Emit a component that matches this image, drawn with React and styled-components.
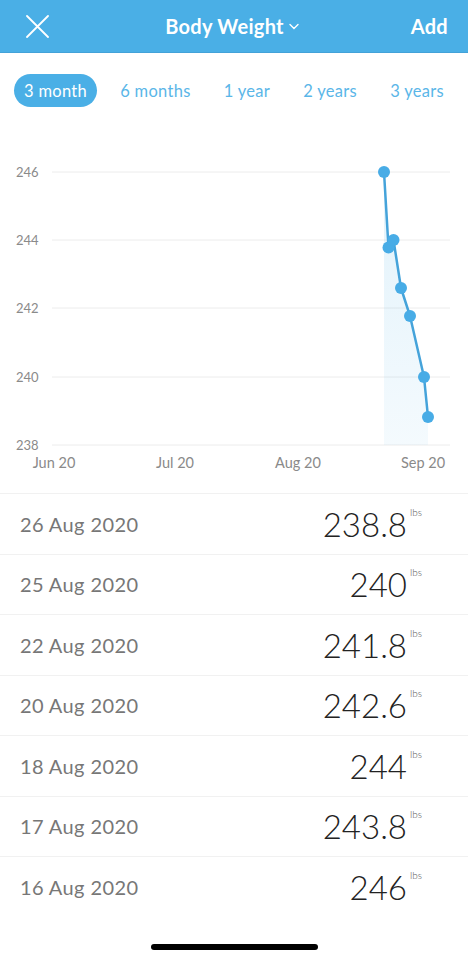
import React from "react";
import styled, { createGlobalStyle } from "styled-components";

const BLUE = "#4aafe6";

const GlobalStyle = createGlobalStyle`
    body{
        margin:0;
        background:#fff;
        font-family:Lato,"Open Sans",sans-serif;
    }
`;

const Page = styled.div`
    width:468px;
    height:960px;
    display:flex;
    flex-direction:column;
    background:#fff;
    overflow:hidden;
`;

const Header = styled.header`
    height:53px;
    background:${BLUE};
    border-bottom:1px solid #43a2d8;
    box-sizing:border-box;
    display:grid;
    grid-template-columns:60px 1fr 60px;
    align-items:center;
    padding:0 20px 0 26px;
    color:#fff;
`;

const Title = styled.div`
    display:flex;
    align-items:center;
    justify-content:center;
    gap:5px;
    font-weight:700;
    font-size:20px;
    letter-spacing:0.3px;
    padding-right:10px;
`;

const AddButton = styled.div`
    text-align:right;
    font-weight:700;
    font-size:20px;
    letter-spacing:0.3px;
`;

const Tabs = styled.nav`
    display:flex;
    justify-content:space-between;
    align-items:center;
    padding:0 14px;
    margin-top:21px;
    height:33px;
`;

const Tab = styled.div`
    height:33px;
    display:flex;
    align-items:center;
    padding:0 10px;
    border-radius:17px;
    font-size:16.5px;
    letter-spacing:0.3px;
    color:${p => (p.$active ? "#fff" : "#5ab6e8")};
    background:${p => (p.$active ? BLUE : "transparent")};
`;

const ChartWrap = styled.div`
    height:386px;
`;

const List = styled.div`
    display:flex;
    flex-direction:column;
`;

const Row = styled.div`
    height:60.5px;
    box-sizing:border-box;
    border-top:1px solid #f1f1f1;
    display:flex;
    align-items:center;
    justify-content:space-between;
    padding:0 61px 0 20px;
`;

const DateText = styled.span`
    font-size:20px;
    letter-spacing:0.4px;
    color:#777;
`;

const Value = styled.span`
    position:relative;
    font-size:33px;
    color:#222;
    font-weight:300;
`;

const Unit = styled.sup`
    position:absolute;
    left:100%;
    top:3px;
    margin-left:3px;
    font-size:10px;
    color:#555;
    line-height:1;
`;

const HomeBar = styled.div`
    margin:auto auto 10px;
    width:167px;
    height:6px;
    border-radius:3px;
    background:#000;
`;

const CloseIcon = () => (
    <svg width="23" height="23" viewBox="0 0 23 23">
        <path d="M1 1 L22 22 M22 1 L1 22" stroke="#fff" strokeWidth="1.8" strokeLinecap="round" />
    </svg>
);

const Chevron = () => (
    <svg width="10" height="7" viewBox="0 0 10 7">
        <path d="M1 1.5 L5 5.5 L9 1.5" stroke="#fff" strokeWidth="1.4" fill="none" strokeLinecap="round" />
    </svg>
);

const TABS = ["3 month", "6 months", "1 year", "2 years", "3 years"];

const Y_TICKS = [
    { label: "246", y: 65 },
    { label: "244", y: 133 },
    { label: "242", y: 201 },
    { label: "240", y: 270 },
    { label: "238", y: 338 },
];

const X_TICKS = [
    { label: "Jun 20", x: 54 },
    { label: "Jul 20", x: 175 },
    { label: "Aug 20", x: 298 },
    { label: "Sep 20", x: 423 },
];

const POINTS = [
    [384, 65],
    [388.5, 140.5],
    [393.5, 133],
    [401, 181],
    [410, 209],
    [424, 270],
    [428, 310],
];

const Chart = () => {
    const line = POINTS.map(p => p.join(",")).join(" ");
    const area = `384,338 ${line} 428,338`;
    return (
        <svg width="468" height="386" viewBox="0 0 468 386">
            <defs>
                <linearGradient id="fillGrad" x1="0" y1="0" x2="0" y2="1">
                    <stop offset="0" stopColor="#4aafe6" stopOpacity="0.16" />
                    <stop offset="1" stopColor="#4aafe6" stopOpacity="0.06" />
                </linearGradient>
            </defs>
            {Y_TICKS.map(t => (
                <g key={t.label}>
                    <line x1="52" x2="450" y1={t.y} y2={t.y} stroke="#ececec" strokeWidth="1" />
                    <text x="16" y={t.y + 4.5} fontSize="13" fill="#8a8a8a" fontFamily="Lato, sans-serif">{t.label}</text>
                </g>
            ))}
            <polygon points={area} fill="url(#fillGrad)" />
            <polyline points={line} fill="none" stroke="#45a3da" strokeWidth="2.5" strokeLinejoin="round" />
            {POINTS.map((p, i) => (
                <circle key={i} cx={p[0]} cy={p[1]} r="6" fill="#48ace6" />
            ))}
            {X_TICKS.map(t => (
                <text key={t.label} x={t.x} y="361" fontSize="14.5" fill="#8a8a8a" textAnchor="middle" fontFamily="Lato, sans-serif">{t.label}</text>
            ))}
        </svg>
    );
};

const ENTRIES = [
    ["26 Aug 2020", "238.8"],
    ["25 Aug 2020", "240"],
    ["22 Aug 2020", "241.8"],
    ["20 Aug 2020", "242.6"],
    ["18 Aug 2020", "244"],
    ["17 Aug 2020", "243.8"],
    ["16 Aug 2020", "246"],
];

export default function App() {
    return (
        <>
            <GlobalStyle />
            <Page>
                <Header>
                    <CloseIcon />
                    <Title>Body Weight <Chevron /></Title>
                    <AddButton>Add</AddButton>
                </Header>
                <Tabs>
                    {TABS.map((t, i) => (
                        <Tab key={t} $active={i === 0}>{t}</Tab>
                    ))}
                </Tabs>
                <ChartWrap>
                    <Chart />
                </ChartWrap>
                <List>
                    {ENTRIES.map(([d, v]) => (
                        <Row key={d}>
                            <DateText>{d}</DateText>
                            <Value>{v}<Unit>lbs</Unit></Value>
                        </Row>
                    ))}
                </List>
                <HomeBar />
            </Page>
        </>
    );
}
